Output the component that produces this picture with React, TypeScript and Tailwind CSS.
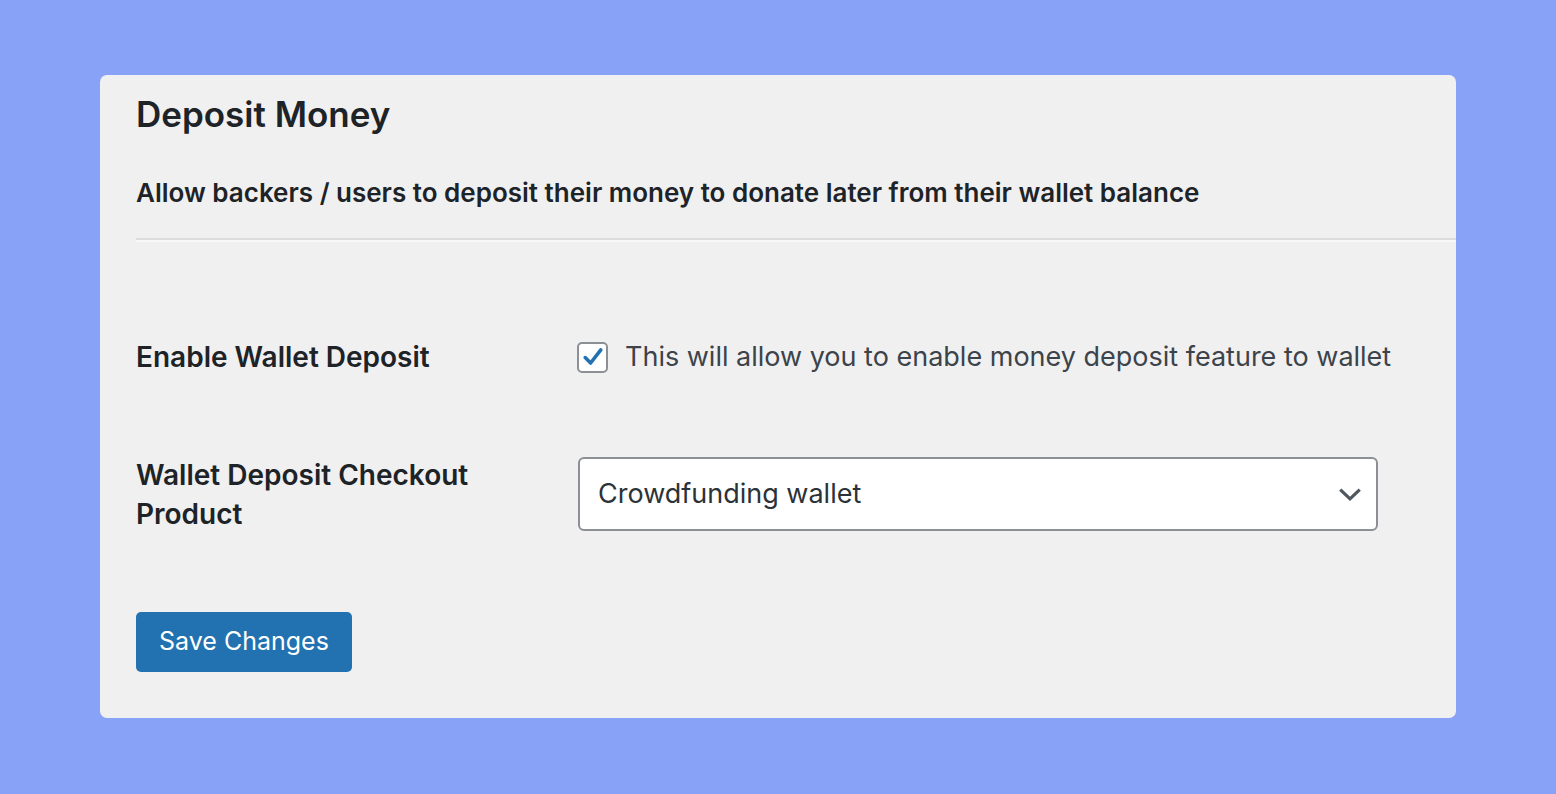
import React, { useState } from "react";

const Checkbox = ({ checked, onChange }: { checked: boolean; onChange: () => void }) => (
    <button
        type="button"
        onClick={onChange}
        className="flex h-[31px] w-[31px] shrink-0 items-center justify-center rounded-[5px] border-2 border-[#8c8f94] bg-white"
    >
        {checked && (
            <svg width="24" height="24" viewBox="0 0 20 20">
                <path d="M3.5 10.5 L8 15 L16.5 4" fill="none" stroke="#2271b1" strokeWidth="3" strokeLinecap="round" strokeLinejoin="round" />
            </svg>
        )}
    </button>
);

const App = () => {
    const [enabled, setEnabled] = useState(true);

    return (
        <div className="min-h-[794px] bg-[#87a2f7] px-[100px] pt-[75px] pb-[76px]" style={{ fontFamily: "Inter, 'Noto Sans', sans-serif" }}>
            <div className="rounded-[7px] bg-[#f0f0f0] pl-9 pb-[46px]">
                <h2 className="pt-[18px] text-[35px] font-semibold leading-[42px] text-[#1d2327]">Deposit Money</h2>
                <p className="mt-[42px] text-[26px] font-semibold leading-[32px] text-[#1d2327]">
                    Allow backers / users to deposit their money to donate later from their wallet balance
                </p>
                <hr className="mt-[29px] border-t-2 border-b-2 border-t-[#dcdcde] border-b-[#f8f8f8]" />

                <div className="mt-[99px] flex items-center">
                    <div className="w-[441px] text-[28px] font-semibold leading-[32px] text-[#1d2327]">Enable Wallet Deposit</div>
                    <div className="flex items-center gap-[17px]">
                        <Checkbox checked={enabled} onChange={() => setEnabled(!enabled)} />
                        <span className="text-[27px] leading-[32px] text-[#3c434a]">
                            This will allow you to enable money deposit feature to wallet
                        </span>
                    </div>
                </div>

                <div className="mt-[83px] flex items-start">
                    <div className="w-[442px] pr-[60px] text-[28px] font-semibold leading-[39px] text-[#1d2327]">
                        Wallet Deposit Checkout Product
                    </div>
                    <div className="mt-[1px] flex h-[74px] w-[800px] items-center justify-between rounded-[6px] border-2 border-[#8c8f94] bg-white pl-[18px] pr-[13px]">
                        <span className="text-[27px] text-[#2c3338]">Crowdfunding wallet</span>
                        <svg width="26" height="26" viewBox="0 0 24 24">
                            <path d="M3 8 L12 16.5 L21 8" fill="none" stroke="#50575e" strokeWidth="3" />
                        </svg>
                    </div>
                </div>

                <button
                    type="button"
                    className="mt-[78px] h-[60px] rounded-[5px] bg-[#2271b1] px-[23px] text-[25px] text-white"
                >
                    Save Changes
                </button>
            </div>
        </div>
    );
};

export default App;
